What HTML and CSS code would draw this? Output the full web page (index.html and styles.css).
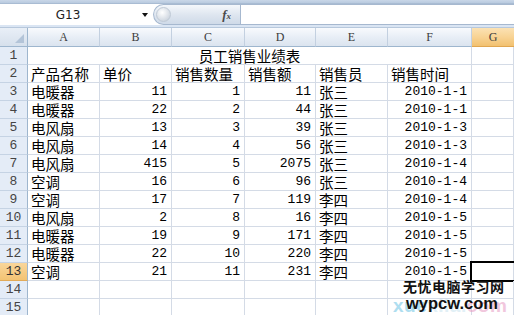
FILE: index.html
```html
<!DOCTYPE html>
<html lang="zh-CN">
<head>
<meta charset="utf-8">
<title>员工销售业绩表</title>
<link rel="stylesheet" href="styles.css">
</head>
<body>
<div class="app">
  <div class="topstrip"></div>
  <div class="fbar">
    <div class="namebox"><span class="name">G13</span><span class="caret"></span></div>
    <div class="pill"><span class="knob"></span><span class="fx">f<span class="fxsub">x</span></span></div>
    <div class="finput"></div>
  </div>
  <div class="sep"></div>
  <div class="sheet">
    <div class="corner"></div>
    <div class="ch">A</div><div class="ch">B</div><div class="ch">C</div><div class="ch">D</div><div class="ch">E</div><div class="ch">F</div><div class="ch sel">G</div>

    <div class="rh">1</div><div class="c title">员工销售业绩表</div><div class="c"></div>

    <div class="rh">2</div><div class="c">产品名称</div><div class="c">单价</div><div class="c">销售数量</div><div class="c">销售额</div><div class="c">销售员</div><div class="c">销售时间</div><div class="c"></div>

    <div class="rh">3</div><div class="c">电暖器</div><div class="c n">11</div><div class="c n">1</div><div class="c n">11</div><div class="c">张三</div><div class="c n">2010-1-1</div><div class="c"></div>
    <div class="rh">4</div><div class="c">电暖器</div><div class="c n">22</div><div class="c n">2</div><div class="c n">44</div><div class="c">张三</div><div class="c n">2010-1-1</div><div class="c"></div>
    <div class="rh">5</div><div class="c">电风扇</div><div class="c n">13</div><div class="c n">3</div><div class="c n">39</div><div class="c">张三</div><div class="c n">2010-1-3</div><div class="c"></div>
    <div class="rh">6</div><div class="c">电风扇</div><div class="c n">14</div><div class="c n">4</div><div class="c n">56</div><div class="c">张三</div><div class="c n">2010-1-3</div><div class="c"></div>
    <div class="rh">7</div><div class="c">电风扇</div><div class="c n">415</div><div class="c n">5</div><div class="c n">2075</div><div class="c">张三</div><div class="c n">2010-1-4</div><div class="c"></div>
    <div class="rh">8</div><div class="c">空调</div><div class="c n">16</div><div class="c n">6</div><div class="c n">96</div><div class="c">张三</div><div class="c n">2010-1-4</div><div class="c"></div>
    <div class="rh">9</div><div class="c">空调</div><div class="c n">17</div><div class="c n">7</div><div class="c n">119</div><div class="c">李四</div><div class="c n">2010-1-4</div><div class="c"></div>
    <div class="rh">10</div><div class="c">电风扇</div><div class="c n">2</div><div class="c n">8</div><div class="c n">16</div><div class="c">李四</div><div class="c n">2010-1-5</div><div class="c"></div>
    <div class="rh">11</div><div class="c">电暖器</div><div class="c n">19</div><div class="c n">9</div><div class="c n">171</div><div class="c">李四</div><div class="c n">2010-1-5</div><div class="c"></div>
    <div class="rh">12</div><div class="c">电暖器</div><div class="c n">22</div><div class="c n">10</div><div class="c n">220</div><div class="c">李四</div><div class="c n">2010-1-5</div><div class="c"></div>
    <div class="rh sel">13</div><div class="c">空调</div><div class="c n">21</div><div class="c n">11</div><div class="c n">231</div><div class="c">李四</div><div class="c n">2010-1-5</div><div class="c active"></div>

    <div class="rh">14</div><div class="c"></div><div class="c"></div><div class="c"></div><div class="c"></div><div class="c"></div><div class="c"></div><div class="c"></div>
    <div class="rh">15</div><div class="c"></div><div class="c"></div><div class="c"></div><div class="c"></div><div class="c"></div><div class="c"></div><div class="c"></div>
  </div>
  <div class="watermark">
    <div class="wm-faint"><span class="cy">xue</span><span class="cy2">xila.</span><span class="pk">com</span></div>
    <div class="wm-cn">无忧电脑学习网</div>
    <div class="wm-en">wypcw.com</div>
  </div>
</div>
</body>
</html>
```

FILE: styles.css
```css
* { box-sizing: border-box; }
html, body { margin: 0; padding: 0; background: #ffffff; }
body { width: 514px; height: 315px; overflow: hidden; }

.app {
  position: relative;
  width: 514px;
  height: 315px;
  overflow: hidden;
  font-family: "Noto Sans CJK SC", sans-serif;
}

.topstrip {
  height: 4px;
  background: linear-gradient(#c9d7e8, #b9cadf);
  border-bottom: 1px solid #a9bcd3;
}

.fbar {
  height: 21px;
  display: flex;
  align-items: stretch;
  background: #ffffff;
}

.namebox {
  width: 153px;
  display: flex;
  align-items: center;
  background: #ffffff;
}
.name {
  width: 136px;
  text-align: center;
  font-family: "DejaVu Sans", sans-serif;
  font-size: 12px;
  color: #1e1e1e;
}
.caret {
  width: 0;
  height: 0;
  border-left: 3.5px solid transparent;
  border-right: 3.5px solid transparent;
  border-top: 4px solid #111;
  margin-left: 6px;
}

.pill {
  width: 87px;
  position: relative;
  display: flex;
  align-items: center;
  justify-content: flex-end;
  padding-right: 9px;
  background: linear-gradient(#f4f7fb, #dde5ef 55%, #cfdae8);
  border: 1px solid #a6b8cf;
  border-right: none;
  border-radius: 11px 0 0 11px;
}
.knob {
  position: absolute;
  left: 2px;
  top: 2px;
  width: 15px;
  height: 15px;
  border-radius: 50%;
  background: radial-gradient(circle at 40% 35%, #ffffff, #d2d9e2 70%, #b7c2cf);
  border: 1px solid #c0cad6;
}
.fx {
  font-family: "Liberation Serif", serif;
  font-style: italic;
  font-weight: bold;
  font-size: 13px;
  color: #4a4a4a;
  line-height: 1;
}
.fxsub { font-size: 9px; }

.finput {
  flex: 1;
  background: #ffffff;
  border-top: 1px solid #a6b8cf;
  border-bottom: 1px solid #a6b8cf;
  border-left: 1px solid #a6b8cf;
}

.sep {
  height: 3px;
  background: #dae5f3;
  border-bottom: 1px solid #b7c8dc;
}

.sheet {
  display: grid;
  grid-template-columns: 28px 72px 72px 73px 71px 72px 84px 42px;
  grid-template-rows: 19px repeat(15, 18px);
}

.corner {
  position: relative;
  background: linear-gradient(#e9eff7, #d6e0ec);
  border-right: 1px solid #9eb6ce;
  border-bottom: 1px solid #9eb6ce;
}
.corner::after {
  content: "";
  position: absolute;
  right: 3px;
  bottom: 3px;
  width: 0;
  height: 0;
  border-left: 9px solid transparent;
  border-bottom: 9px solid #b3c4d8;
}

.ch {
  display: flex;
  align-items: center;
  justify-content: center;
  background: linear-gradient(#f8fafd, #e8eef6 50%, #dbe4ef);
  border-right: 1px solid #c3d0e0;
  border-bottom: 1px solid #9eb6ce;
  font-family: "Liberation Serif", serif;
  font-size: 12px;
  color: #3c3c3c;
}
.ch.sel {
  background: linear-gradient(#fbe2b4, #f8d394 50%, #f2c170);
  border-right: none;
  border-bottom: 1px solid #e0a650;
}

.rh {
  display: flex;
  align-items: center;
  justify-content: center;
  background: #e4ecf7;
  border-right: 1px solid #9eb6ce;
  border-bottom: 1px solid #c5d3e4;
  font-family: "Liberation Mono", monospace;
  font-size: 13px;
  color: #444;
}
.rh.sel {
  background: linear-gradient(#f9d69b, #f3c373);
  border-bottom: 1px solid #e2ab59;
  color: #333;
}

.c {
  position: relative;
  display: flex;
  align-items: center;
  padding: 0 3px 0 3px;
  border-right: 1px solid #d4dbe6;
  border-bottom: 1px solid #d4dbe6;
  font-size: 14.5px;
  line-height: 17px;
  color: #000;
  white-space: nowrap;
}
.c.n {
  justify-content: flex-end;
  padding-right: 4px;
  font-family: "Liberation Mono", monospace;
  font-size: 13px;
}
.c.title {
  grid-column: 2 / 8;
  justify-content: center;
}

.c.active::after {
  content: "";
  position: absolute;
  left: -2px;
  top: -2px;
  right: -4px;
  bottom: -2px;
  border: 2px solid #000;
}

.watermark {
  position: absolute;
  left: 396px;
  top: 278px;
  width: 118px;
}
.wm-faint {
  position: absolute;
  left: -3px;
  top: 17px;
  font-family: "Liberation Sans", sans-serif;
  font-weight: bold;
  font-size: 19px;
  letter-spacing: 0.5px;
  opacity: 0.55;
}
.wm-faint .cy { color: #6cc4e4; }
.wm-faint .cy2 { color: #c9e4ef; }
.wm-faint .pk { color: #e79ac2; }
.wm-cn {
  position: relative;
  padding-left: 7px;
  font-family: "Noto Sans CJK SC", sans-serif;
  font-weight: bold;
  font-size: 14px;
  letter-spacing: 0.5px;
  line-height: 17px;
  color: #111;
}
.wm-en {
  position: relative;
  padding-left: 10px;
  font-family: "Liberation Sans", sans-serif;
  font-weight: bold;
  font-size: 16.5px;
  line-height: 17px;
  color: #111;
}
```
